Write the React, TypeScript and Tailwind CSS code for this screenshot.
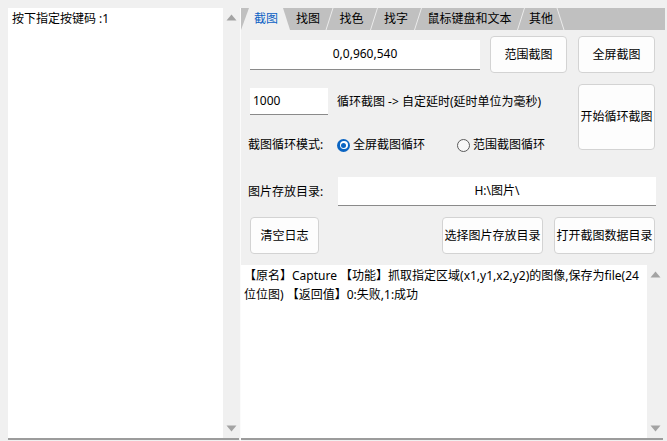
import React from "react";

const font = { fontFamily: '"Noto Sans", "Noto Sans CJK SC", sans-serif' };

function Btn({ children, className }: { children: React.ReactNode; className: string }) {
  return (
    <div
      className={
        "flex items-center justify-center rounded-[4px] border border-[#d3d3d3] bg-[#fdfdfd] text-[12px] leading-[16px] text-black " +
        className
      }
    >
      {children}
    </div>
  );
}

function UpArrow() {
  return (
    <svg width="11" height="7" viewBox="0 0 11 7">
      <polygon points="0.5,6.5 5.5,0.5 10.5,6.5" fill="#a3a3a3" />
    </svg>
  );
}
function DownArrow() {
  return (
    <svg width="11" height="7" viewBox="0 0 11 7">
      <polygon points="0.5,0.5 10.5,0.5 5.5,6.5" fill="#a3a3a3" />
    </svg>
  );
}

function Scrollbar() {
  return (
    <div className="flex w-[16px] flex-col items-center justify-between bg-[#f0f0f0] py-[6px]">
      <UpArrow />
      <DownArrow />
    </div>
  );
}

const tabs = [
  { label: "截图", w: "w-[46px]", active: true },
  { label: "找图", w: "w-[42px]" },
  { label: "找色", w: "w-[45px]" },
  { label: "找字", w: "w-[44px]" },
  { label: "鼠标键盘和文本", w: "w-[103px]" },
  { label: "其他", w: "w-[40px]" },
];

export default function App() {
  return (
    <div
      className="flex h-[441px] w-[667px] overflow-hidden bg-[#f0f0f0] pl-[8px] pt-[8px] text-black"
      style={font}
    >
      {/* Left log panel */}
      <div className="flex h-[432px] w-[231px] border-b-2 border-[#9c9c9c] bg-white">
        <div className="flex-1 pl-[4px] pt-[3px] text-[12px] leading-[16px]">按下指定按键码 :1</div>
        <Scrollbar />
      </div>

      {/* Right panel */}
      <div className="ml-[1px] flex w-[427px] flex-col border-l border-[#fbfbfb]">
        {/* Tab strip */}
        <div className="relative h-[22px] w-[424px] bg-[#c0c0c0]">
          <svg className="absolute left-0 top-0" width="424" height="22" viewBox="0 0 424 22">
            <polygon points="0,22 8,0 42,0 49,22" fill="#f0f0f0" />
            <line x1="85" y1="22" x2="92" y2="0" stroke="#ebebeb" strokeWidth="1" />
            <line x1="129.5" y1="22" x2="136.5" y2="0" stroke="#ebebeb" strokeWidth="1" />
            <line x1="173.5" y1="22" x2="180.5" y2="0" stroke="#ebebeb" strokeWidth="1" />
            <line x1="276.5" y1="22" x2="283.5" y2="0" stroke="#ebebeb" strokeWidth="1" />
            <line x1="316" y1="0" x2="323" y2="22" stroke="#ebebeb" strokeWidth="1" />
          </svg>
          <div className="relative flex h-full">
            {tabs.map((t) => (
              <div
                key={t.label}
                className={
                  t.w +
                  " flex items-center justify-center text-[12px] leading-[16px] " +
                  (t.active ? "pl-[4px] text-[#0a5fc4]" : "text-black")
                }
              >
                {t.label}
              </div>
            ))}
          </div>
        </div>

        {/* Content */}
        <div className="flex flex-col pl-[9px]">
          {/* Row 1 */}
          <div className="mt-[6px] flex h-[37px] items-center">
            <div className="flex h-[30px] w-[230px] items-center justify-center border-b border-[#8a8a8a] bg-white text-[12px]">
              0,0,960,540
            </div>
            <Btn className="ml-[10px] h-[37px] w-[77px]">范围截图</Btn>
            <Btn className="ml-[11px] h-[37px] w-[77px]">全屏截图</Btn>
          </div>

          {/* Row 2 */}
          <div className="mt-[11px] flex h-[66px]">
            <div className="flex w-[328px] flex-col">
              <div className="mt-[4px] flex h-[27px] items-center">
                <div className="flex h-[27px] w-[78px] items-center border-b border-[#8a8a8a] bg-white pl-[3px] text-[12px]">
                  1000
                </div>
                <div className="ml-[9px] text-[12px] leading-[16px]">循环截图 -&gt; 自定延时(延时单位为毫秒)</div>
              </div>
              <div className="mt-[22px] flex h-[16px] items-center">
                <div className="ml-[-2px] w-[89px] text-[12px] leading-[16px]">截图循环模式:</div>
                <div className="flex items-center">
                  <div className="flex h-[13px] w-[13px] items-center justify-center rounded-full bg-[#0a64c2]">
                    <div className="flex h-[8px] w-[8px] items-center justify-center rounded-full bg-white">
                      <div className="h-[5px] w-[5px] rounded-full bg-[#0a64c2]" />
                    </div>
                  </div>
                  <div className="ml-[3px] text-[12px] leading-[16px]">全屏截图循环</div>
                </div>
                <div className="ml-[32px] flex items-center">
                  <div className="h-[13px] w-[13px] rounded-full border border-[#5a5a5a] bg-[#f8f8f8]" />
                  <div className="ml-[3px] text-[12px] leading-[16px]">范围截图循环</div>
                </div>
              </div>
            </div>
            <Btn className="h-[66px] w-[77px]">开始循环截图</Btn>
          </div>

          {/* Row 3 */}
          <div className="mt-[27px] flex h-[29px] items-center">
            <div className="ml-[-2px] w-[90px] text-[12px] leading-[16px]">图片存放目录:</div>
            <div className="flex h-[29px] w-[318px] items-center justify-center border-b border-[#8a8a8a] bg-white text-[12px]">
              H:\图片\
            </div>
          </div>

          {/* Row 4 */}
          <div className="mt-[11px] flex h-[37px]">
            <Btn className="h-[37px] w-[69px]">清空日志</Btn>
            <Btn className="ml-[123px] h-[37px] w-[101px]">选择图片存放目录</Btn>
            <Btn className="ml-[11px] h-[37px] w-[101px]">打开截图数据目录</Btn>
          </div>
        </div>

        {/* Log area */}
        <div className="mt-[11px] flex h-[175px] w-[422px] border-b-2 border-[#9c9c9c] bg-white">
          <div className="flex-1 pl-[3px] pr-[2px] pt-[1px] text-[12px] leading-[19px] break-all">
            【原名】Capture 【功能】抓取指定区域(x1,y1,x2,y2)的图像,保存为file(24位位图) 【返回值】0:失败,1:成功
          </div>
          <Scrollbar />
        </div>
      </div>
    </div>
  );
}
